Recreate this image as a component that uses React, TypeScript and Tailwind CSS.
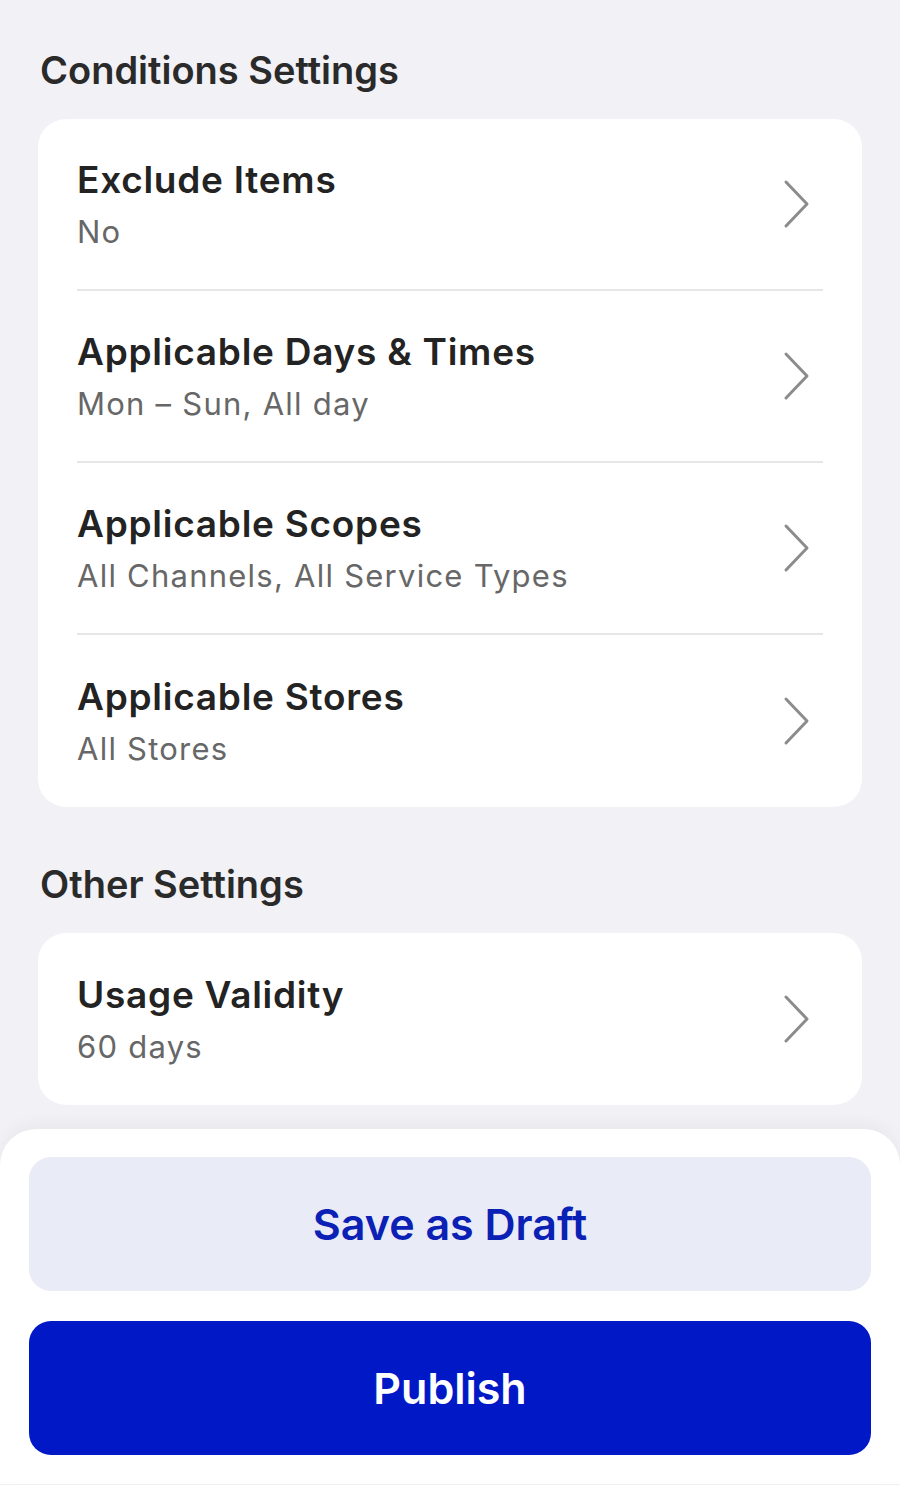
import React from "react";

interface SettingRow {
  title: string;
  value: string;
}

const conditionRows: SettingRow[] = [
  { title: "Exclude Items", value: "No" },
  { title: "Applicable Days & Times", value: "Mon – Sun, All day" },
  { title: "Applicable Scopes", value: "All Channels, All Service Types" },
  { title: "Applicable Stores", value: "All Stores" },
];

const otherRows: SettingRow[] = [{ title: "Usage Validity", value: "60 days" }];

const Chevron = () => (
  <svg width="30" height="50" viewBox="0 0 30 50" fill="none" className="shrink-0">
    <path d="M5 3 L26 25 L5 47" stroke="#8c8c8c" strokeWidth="3" strokeLinecap="round" strokeLinejoin="round" />
  </svg>
);

const SettingsCard = ({ rows }: { rows: SettingRow[] }) => (
  <div className="bg-white rounded-[28px] px-[39px]">
    {rows.map((row, i) => (
      <div
        key={row.title}
        className={`flex items-center justify-between h-[172px] ${i < rows.length - 1 ? "border-b-2 border-[#e6e6e8]" : ""}`}
      >
        <div className="flex flex-col gap-[12px]">
          <span className="text-[37px] leading-[44px] font-semibold tracking-[0.02em] text-[#232323]">{row.title}</span>
          <span className="text-[31px] leading-[36px] tracking-[0.04em] text-[#676767]">{row.value}</span>
        </div>
        <div className="pr-[12px]">
          <Chevron />
        </div>
      </div>
    ))}
  </div>
);

export default function App() {
  return (
    <div className="min-h-[1485px] bg-[#f1f1f6] flex flex-col" style={{ fontFamily: "Inter, 'Noto Sans', sans-serif" }}>
      <div className="px-[38px] pt-[47px]">
        <h2 className="text-[38px] leading-[46px] font-semibold text-[#2a2a2a] pl-[2px] mb-[26px]">Conditions Settings</h2>
        <SettingsCard rows={conditionRows} />
        <h2 className="text-[38px] leading-[46px] font-semibold text-[#2a2a2a] pl-[2px] mt-[54px] mb-[26px]">Other Settings</h2>
        <SettingsCard rows={otherRows} />
      </div>
      <div className="mt-[24px] bg-white rounded-t-[36px] shadow-[0_-6px_16px_rgba(0,0,0,0.04)] px-[29px] pt-[28px] pb-[29px] flex flex-col gap-[30px]">
        <button className="h-[134px] rounded-[22px] bg-[#e9ebf6] text-[#0b20b4] text-[43px] font-semibold">
          Save as Draft
        </button>
        <button className="h-[134px] rounded-[22px] bg-[#0018c6] text-white text-[43px] font-semibold">
          Publish
        </button>
      </div>
    </div>
  );
}
